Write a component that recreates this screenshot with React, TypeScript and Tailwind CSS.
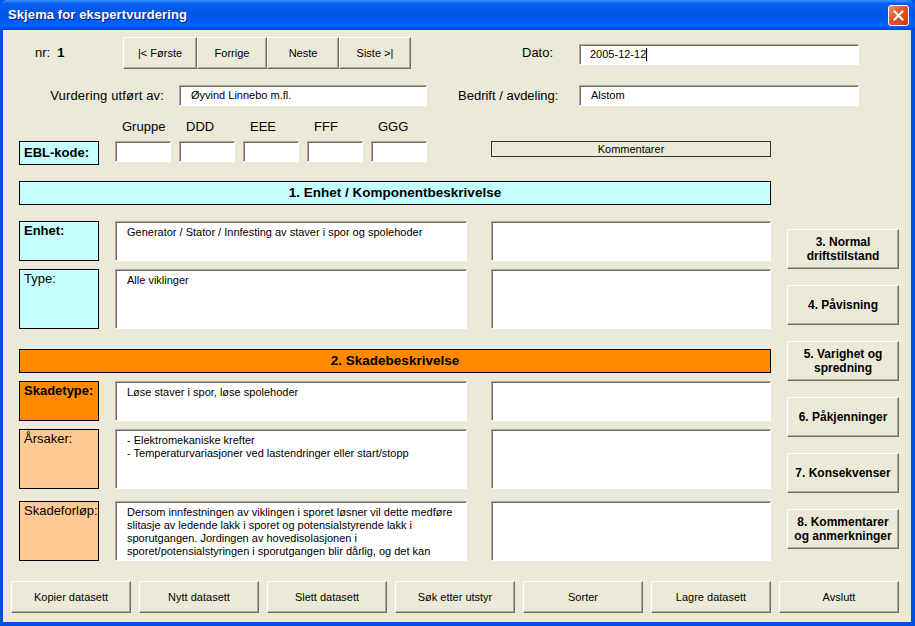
import React from "react";

const FONT = "font-['Liberation_Sans',Arial,sans-serif]";

const raised =
  "flex items-center justify-center text-center bg-[#ECE9D8] border border-t-white border-l-white border-r-[#716F64] border-b-[#716F64] shadow-[inset_-1px_-1px_0_#ACA899]";
const sunken =
  "bg-white border border-t-[#ACA899] border-l-[#ACA899] border-r-white border-b-white shadow-[inset_1px_1px_0_#716F64]";

const TitleBar = () => (
  <div className="h-[30px] shrink-0 flex items-center justify-between pl-[8px] pr-[6px] rounded-t-[7px] bg-[linear-gradient(to_bottom,#3D95FF_0%,#0A5FF0_12%,#0055EA_45%,#0062F8_85%,#0050E0_95%,#003DD7_100%)]">
    <span className="text-white font-bold text-[13px] [text-shadow:1px_1px_0_#0A1E80] tracking-[0.1px]">
      Skjema for ekspertvurdering
    </span>
    <div className="w-[21px] h-[21px] rounded-[3px] border border-white bg-[linear-gradient(135deg,#EE8F70_0%,#E1552C_45%,#C23A12_100%)] flex items-center justify-center">
      <svg width="11" height="11" viewBox="0 0 11 11">
        <path d="M1.5 1.5 L9.5 9.5 M9.5 1.5 L1.5 9.5" stroke="white" strokeWidth="2" strokeLinecap="square" />
      </svg>
    </div>
  </div>
);

const NavButton = ({ w, children }: { w: string; children: React.ReactNode }) => (
  <div className={`${raised} ${w} h-[32px] text-[11px]`}>{children}</div>
);

const LabelBox = ({
  h,
  bg,
  bold,
  children,
}: {
  h: string;
  bg: string;
  bold?: boolean;
  children: React.ReactNode;
}) => (
  <div
    className={`w-[80px] ${h} ${bg} border border-black pl-[4px] pt-[1px] text-[13px] leading-[15px] ${
      bold ? "font-bold" : ""
    }`}
  >
    {children}
  </div>
);

const FieldRow = ({
  h,
  bg,
  bold,
  label,
  lines,
  mt,
}: {
  h: string;
  bg: string;
  bold?: boolean;
  label: string;
  lines: string[];
  mt: string;
}) => (
  <div className={`flex ${mt}`}>
    <LabelBox h={h} bg={bg} bold={bold}>
      {label}
    </LabelBox>
    <div className={`${sunken} ml-[16px] w-[352px] ${h} pl-[11px] pt-[4px] text-[11px] leading-[13px] overflow-hidden`}>
      {lines.map((l, i) => (
        <div key={i} className="whitespace-nowrap">
          {l}
        </div>
      ))}
    </div>
    <div className={`${sunken} ml-[24px] w-[280px] ${h}`} />
  </div>
);

const SideButton = ({ children }: { children: React.ReactNode }) => (
  <div className={`${raised} w-[112px] h-[40px] text-[12px] font-bold leading-[14px]`}>{children}</div>
);

export default function App() {
  const codes = ["Gruppe", "DDD", "EEE", "FFF", "GGG"];
  const bottom = [
    "Kopier datasett",
    "Nytt datasett",
    "Slett datasett",
    "Søk etter utstyr",
    "Sorter",
    "Lagre datasett",
    "Avslutt",
  ];

  return (
    <div className={`w-[915px] h-[626px] flex flex-col bg-[#0250E0] ${FONT} text-black`}>
      <TitleBar />
      <div className="flex-1 ml-[3px] mr-[4px] mb-[4px] bg-[#ECE9D8] flex flex-col">
        {/* Row 1: nr + navigation + date */}
        <div className="flex items-center mt-[7px] h-[32px]">
          <div className="w-[120px] pl-[32px] flex items-baseline gap-[7px] text-[13px]">
            <span>nr:</span>
            <span className="font-bold">1</span>
          </div>
          <NavButton w="w-[74px]">|&lt; Første</NavButton>
          <NavButton w="w-[70px]">Forrige</NavButton>
          <NavButton w="w-[72px]">Neste</NavButton>
          <NavButton w="w-[72px]">Siste &gt;|</NavButton>
          <div className="w-[168px] pl-[111px] text-[13px]">Dato:</div>
          <div className={`${sunken} w-[280px] h-[21px] mt-[3px] flex items-center pl-[10px] text-[11px]`}>
            2005-12-12
            <span className="inline-block w-[1px] h-[13px] bg-black" />
          </div>
        </div>

        {/* Row 2 */}
        <div className="flex items-center mt-[16px] h-[21px]">
          <div className="w-[176px] pr-[15px] text-right text-[13px] tracking-[0.15px]">Vurdering utført av:</div>
          <div className={`${sunken} w-[248px] h-[21px] flex items-center pl-[11px] text-[11px]`}>
            Øyvind Linnebo m.fl.
          </div>
          <div className="w-[152px] pl-[31px] text-[13px]">Bedrift / avdeling:</div>
          <div className={`${sunken} w-[280px] h-[21px] flex items-center pl-[11px] text-[11px]`}>Alstom</div>
        </div>

        {/* Code labels */}
        <div className="flex mt-[13px] h-[15px] ml-[112px] text-[13px] leading-[15px]">
          {codes.map((c) => (
            <div key={c} className="w-[64px] pl-[7px]">
              {c}
            </div>
          ))}
        </div>

        {/* EBL row */}
        <div className="flex items-start mt-[7px] ml-[16px]">
          <div className="w-[80px] h-[24px] bg-[#C6FFFF] border border-black pl-[4px] flex items-center text-[13px] font-bold">
            EBL-kode:
          </div>
          <div className="flex gap-[8px] ml-[16px]">
            {codes.map((c) => (
              <div key={c} className={`${sunken} w-[56px] h-[21px]`} />
            ))}
          </div>
          <div className="ml-[64px] w-[280px] h-[16px] border border-[#333] flex items-center justify-center text-[11px]">
            Kommentarer
          </div>
        </div>

        {/* Main sections */}
        <div className="flex mt-[16px] ml-[16px]">
          <div className="w-[752px] flex flex-col">
            <div className="h-[24px] bg-[#C6FFFF] border border-black flex items-center justify-center text-[13.5px] font-bold">
              1. Enhet / Komponentbeskrivelse
            </div>
            <FieldRow
              mt="mt-[16px]"
              h="h-[40px]"
              bg="bg-[#C6FFFF]"
              bold
              label="Enhet:"
              lines={["Generator / Stator / Innfesting av staver i spor og spolehoder"]}
            />
            <FieldRow mt="mt-[8px]" h="h-[60px]" bg="bg-[#C6FFFF]" label="Type:" lines={["Alle viklinger"]} />
            <div className="mt-[20px] h-[24px] bg-[#FF8A00] border border-black flex items-center justify-center text-[13.5px] font-bold">
              2. Skadebeskrivelse
            </div>
            <FieldRow
              mt="mt-[8px]"
              h="h-[40px]"
              bg="bg-[#FF8A00]"
              bold
              label="Skadetype:"
              lines={["Løse staver i spor, løse spolehoder"]}
            />
            <FieldRow
              mt="mt-[8px]"
              h="h-[60px]"
              bg="bg-[#FFC993]"
              label="Årsaker:"
              lines={["- Elektromekaniske krefter", "- Temperaturvariasjoner ved lastendringer eller start/stopp"]}
            />
            <FieldRow
              mt="mt-[12px]"
              h="h-[60px]"
              bg="bg-[#FFC993]"
              label="Skadeforløp:"
              lines={[
                "Dersom innfestningen av viklingen i sporet løsner vil dette medføre",
                "slitasje av ledende lakk i sporet og potensialstyrende lakk i",
                "sporutgangen. Jordingen av hovedisolasjonen i",
                "sporet/potensialstyringen i sporutgangen blir dårlig, og det kan",
              ]}
            />
          </div>
          <div className="ml-[16px] pt-[48px] flex flex-col gap-[16px]">
            <SideButton>
              3. Normal
              <br />
              driftstilstand
            </SideButton>
            <SideButton>4. Påvisning</SideButton>
            <SideButton>
              5. Varighet og
              <br />
              spredning
            </SideButton>
            <SideButton>6. Påkjenninger</SideButton>
            <SideButton>7. Konsekvenser</SideButton>
            <SideButton>
              8. Kommentarer
              <br />
              og anmerkninger
            </SideButton>
          </div>
        </div>

        {/* Bottom buttons */}
        <div className="flex gap-[8px] mt-[20px] ml-[8px]">
          {bottom.map((b) => (
            <div key={b} className={`${raised} w-[120px] h-[32px] text-[11px]`}>
              {b}
            </div>
          ))}
        </div>
      </div>
    </div>
  );
}
